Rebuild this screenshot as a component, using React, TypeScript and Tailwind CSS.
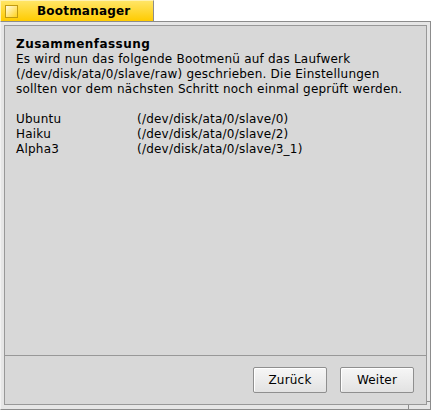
export default function App() {
  const entries: [string, string][] = [
    ["Ubuntu", "(/dev/disk/ata/0/slave/0)"],
    ["Haiku", "(/dev/disk/ata/0/slave/2)"],
    ["Alpha3", "(/dev/disk/ata/0/slave/3_1)"],
  ];
  return (
    <div className="w-[431px] h-[410px] bg-white flex flex-col font-['DejaVu_Sans',sans-serif] text-[12px] leading-[15px] text-black tracking-[0.22px]">
      {/* Tab */}
      <div className="h-[21px] w-[154px] flex items-center border-t border-l border-r border-t-[#fff2b0] border-l-[#fff2b0] border-r-[#8c8c8c] bg-[linear-gradient(to_bottom,#ffe566,#ffcb00)]">
        <div className="ml-[4px] w-[13px] h-[13px] border border-[#c09a10] bg-[linear-gradient(135deg,#fffbe4,#ffd21a)]" />
        <span className="ml-[19px] font-bold whitespace-nowrap tracking-[0.2px]">Bootmanager</span>
      </div>
      {/* Frame */}
      <div className="relative h-[389px] w-[431px] border border-t-[#8c8c8c] border-r-[#8c8c8c] border-b-[#8c8c8c] border-l-[#f2f2f2] bg-[#e6e6e6] pt-[3px] pl-[3px] pr-[3px] pb-[4px]">
        <div className="h-full w-full border border-[#989898] bg-[#d8d8d8] flex flex-col">
          <div className="flex-1 pl-[11px] pt-[11px]">
            <div className="font-bold whitespace-nowrap tracking-[0.45px]">Zusammenfassung</div>
            <div className="whitespace-nowrap">Es wird nun das folgende Bootmenü auf das Laufwerk</div>
            <div className="whitespace-nowrap">(/dev/disk/ata/0/slave/raw) geschrieben. Die Einstellungen</div>
            <div className="whitespace-nowrap">sollten vor dem nächsten Schritt noch einmal geprüft werden.</div>
            <div className="h-[15px]" />
            {entries.map(([name, path]) => (
              <div key={name} className="flex whitespace-nowrap">
                <span className="w-[121px]">{name}</span>
                <span>{path}</span>
              </div>
            ))}
          </div>
          <div className="h-px bg-[#989898]" />
          <div className="h-[48px] flex items-center justify-end gap-[13px] pr-[12px]">
            <button className="w-[74px] h-[26px] rounded-[2px] border border-[#8f8f8f] bg-[linear-gradient(to_bottom,#f6f6f6,#e2e2e2)] shadow-[inset_1px_1px_0_#ffffff] text-[12px] leading-[15px] text-black tracking-[0.22px]">
              Zurück
            </button>
            <button className="w-[74px] h-[26px] rounded-[2px] border border-[#8f8f8f] bg-[linear-gradient(to_bottom,#f6f6f6,#e2e2e2)] shadow-[inset_1px_1px_0_#ffffff] text-[12px] leading-[15px] text-black tracking-[0.22px]">
              Weiter
            </button>
          </div>
        </div>
        {/* resize markers */}
        <div className="absolute right-[-1px] bottom-[7px] w-[4px] h-px bg-[#8c8c8c]" />
        <div className="absolute bottom-[-1px] right-[21px] w-px h-[5px] bg-[#8c8c8c]" />
      </div>
    </div>
  );
}
